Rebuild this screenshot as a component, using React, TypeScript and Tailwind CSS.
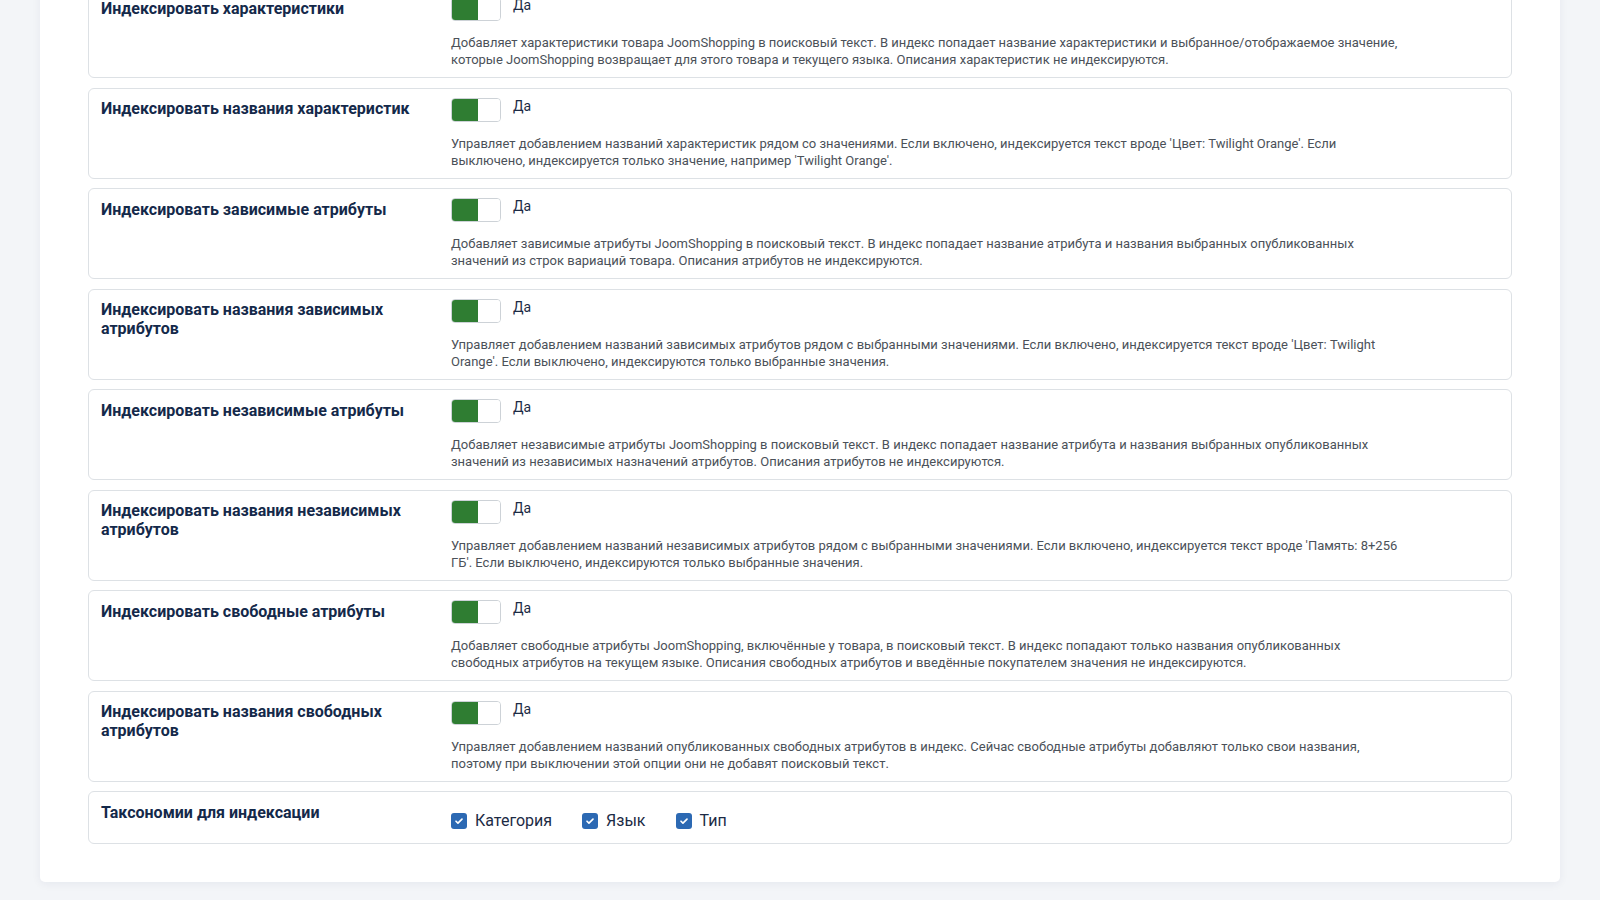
import { useState } from 'react';

type Option = {
  id: string;
  label: string;
  description: string;
};

const options: Option[] = [
  {
    id: 'chars',
    label: 'Индексировать характеристики',
    description:
      'Добавляет характеристики товара JoomShopping в поисковый текст. В индекс попадает название характеристики и выбранное/отображаемое значение, которые JoomShopping возвращает для этого товара и текущего языка. Описания характеристик не индексируются.',
  },
  {
    id: 'char-names',
    label: 'Индексировать названия характеристик',
    description:
      "Управляет добавлением названий характеристик рядом со значениями. Если включено, индексируется текст вроде 'Цвет: Twilight Orange'. Если выключено, индексируется только значение, например 'Twilight Orange'.",
  },
  {
    id: 'dep-attrs',
    label: 'Индексировать зависимые атрибуты',
    description:
      'Добавляет зависимые атрибуты JoomShopping в поисковый текст. В индекс попадает название атрибута и названия выбранных опубликованных значений из строк вариаций товара. Описания атрибутов не индексируются.',
  },
  {
    id: 'dep-attr-names',
    label: 'Индексировать названия зависимых атрибутов',
    description:
      "Управляет добавлением названий зависимых атрибутов рядом с выбранными значениями. Если включено, индексируется текст вроде 'Цвет: Twilight Orange'. Если выключено, индексируются только выбранные значения.",
  },
  {
    id: 'indep-attrs',
    label: 'Индексировать независимые атрибуты',
    description:
      'Добавляет независимые атрибуты JoomShopping в поисковый текст. В индекс попадает название атрибута и названия выбранных опубликованных значений из независимых назначений атрибутов. Описания атрибутов не индексируются.',
  },
  {
    id: 'indep-attr-names',
    label: 'Индексировать названия независимых атрибутов',
    description:
      "Управляет добавлением названий независимых атрибутов рядом с выбранными значениями. Если включено, индексируется текст вроде 'Память: 8+256 ГБ'. Если выключено, индексируются только выбранные значения.",
  },
  {
    id: 'free-attrs',
    label: 'Индексировать свободные атрибуты',
    description:
      'Добавляет свободные атрибуты JoomShopping, включённые у товара, в поисковый текст. В индекс попадают только названия опубликованных свободных атрибутов на текущем языке. Описания свободных атрибутов и введённые покупателем значения не индексируются.',
  },
  {
    id: 'free-attr-names',
    label: 'Индексировать названия свободных атрибутов',
    description:
      'Управляет добавлением названий опубликованных свободных атрибутов в индекс. Сейчас свободные атрибуты добавляют только свои названия, поэтому при выключении этой опции они не добавят поисковый текст.',
  },
];

const taxonomies = ['Категория', 'Язык', 'Тип'];

const Toggle = ({ on, onClick }: { on: boolean; onClick: () => void }) => (
  <button
    type="button"
    onClick={onClick}
    className="flex h-6 w-[50px] shrink-0 overflow-hidden rounded-[4px] border border-[#cdd2d7] bg-white p-0"
  >
    <span className={`h-full w-[26px] ${on ? 'bg-[#2f7d32]' : 'bg-white'}`} />
    <span className={`h-full flex-1 ${on ? 'bg-white' : 'bg-[#c9cdd2]'}`} />
  </button>
);

const Check = ({ checked }: { checked: boolean }) => (
  <span
    className={`flex h-4 w-4 items-center justify-center rounded-[3px] ${
      checked ? 'bg-[#2c69b3]' : 'border border-[#adb5bd] bg-white'
    }`}
  >
    {checked && (
      <svg viewBox="0 0 16 16" className="h-3 w-3" fill="none">
        <path d="M4 8.3l2.6 2.6L12 5.6" stroke="#fff" strokeWidth="2.2" strokeLinecap="round" strokeLinejoin="round" />
      </svg>
    )}
  </span>
);

const App = () => {
  const [enabled, setEnabled] = useState<Record<string, boolean>>(
    Object.fromEntries(options.map((o) => [o.id, true]))
  );
  const [checked, setChecked] = useState<Record<string, boolean>>(
    Object.fromEntries(taxonomies.map((t) => [t, true]))
  );

  return (
    <div className="min-h-screen bg-[#f3f5f8] pb-[18px] font-['Roboto','Liberation_Sans',sans-serif]">
      {/* panel is scrolled: its top sits above the viewport */}
      <div className="mx-10 -mt-[13px] rounded-b-[5px] bg-white px-12 pb-[38px] shadow-[0_2px_10px_rgba(20,40,80,0.06)]">
        <div className="flex flex-col gap-[9.5px]">
          {options.map((opt) => (
            <div
              key={opt.id}
              className="grid grid-cols-[350px_1fr] rounded-md border border-[#dde1e5] bg-white px-3 pb-[9px] pt-[9px]"
            >
              <div className="pr-4 pt-[1.5px] text-base font-bold leading-[19px] text-[#14294a]">{opt.label}</div>
              <div>
                <div className="flex items-start gap-3">
                  <Toggle
                    on={enabled[opt.id]}
                    onClick={() => setEnabled((prev) => ({ ...prev, [opt.id]: !prev[opt.id] }))}
                  />
                  <span className="text-sm leading-4 text-[#1c2b45]">{enabled[opt.id] ? 'Да' : 'Нет'}</span>
                </div>
                <p className="mt-[13px] max-w-[950px] text-[13px] leading-[17px] text-[#4b5159]">
                  {opt.description}
                </p>
              </div>
            </div>
          ))}

          <div className="grid grid-cols-[350px_1fr] rounded-md border border-[#dde1e5] bg-white px-3 pb-[10px] pt-[9px]">
            <div className="pr-4 pt-[1.5px] text-base font-bold leading-[19px] text-[#14294a]">
              Таксономии для индексации
            </div>
            <div className="mt-2 flex h-6 items-center gap-[30px]">
              {taxonomies.map((t) => (
                <label
                  key={t}
                  className="flex cursor-pointer items-center gap-2"
                  onClick={() => setChecked((prev) => ({ ...prev, [t]: !prev[t] }))}
                >
                  <Check checked={checked[t]} />
                  <span className="text-base text-[#1c2b45]">{t}</span>
                </label>
              ))}
            </div>
          </div>
        </div>
      </div>
    </div>
  );
};

export default App;
